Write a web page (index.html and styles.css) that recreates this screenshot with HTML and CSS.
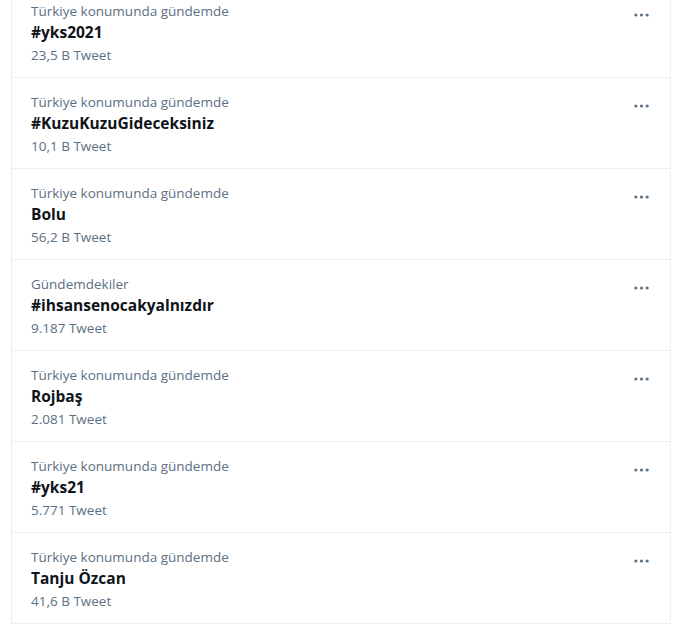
FILE: index.html
```html
<!DOCTYPE html>
<html lang="tr">
<head>
<meta charset="utf-8">
<link rel="stylesheet" href="styles.css">
</head>
<body>
<div class="list">
  <div class="trend">
    <div class="info">
      <div class="meta">Türkiye konumunda gündemde</div>
      <div class="title">#yks2021</div>
      <div class="count">23,5 B Tweet</div>
    </div>
    <svg class="more" viewBox="0 0 18 6"><circle cx="3" cy="3" r="1.7"/><circle cx="9" cy="3" r="1.7"/><circle cx="15" cy="3" r="1.7"/></svg>
  </div>
  <div class="trend">
    <div class="info">
      <div class="meta">Türkiye konumunda gündemde</div>
      <div class="title">#KuzuKuzuGideceksiniz</div>
      <div class="count">10,1 B Tweet</div>
    </div>
    <svg class="more" viewBox="0 0 18 6"><circle cx="3" cy="3" r="1.7"/><circle cx="9" cy="3" r="1.7"/><circle cx="15" cy="3" r="1.7"/></svg>
  </div>
  <div class="trend">
    <div class="info">
      <div class="meta">Türkiye konumunda gündemde</div>
      <div class="title">Bolu</div>
      <div class="count">56,2 B Tweet</div>
    </div>
    <svg class="more" viewBox="0 0 18 6"><circle cx="3" cy="3" r="1.7"/><circle cx="9" cy="3" r="1.7"/><circle cx="15" cy="3" r="1.7"/></svg>
  </div>
  <div class="trend">
    <div class="info">
      <div class="meta">Gündemdekiler</div>
      <div class="title">#ihsansenocakyalnızdır</div>
      <div class="count">9.187 Tweet</div>
    </div>
    <svg class="more" viewBox="0 0 18 6"><circle cx="3" cy="3" r="1.7"/><circle cx="9" cy="3" r="1.7"/><circle cx="15" cy="3" r="1.7"/></svg>
  </div>
  <div class="trend">
    <div class="info">
      <div class="meta">Türkiye konumunda gündemde</div>
      <div class="title">Rojbaş</div>
      <div class="count">2.081 Tweet</div>
    </div>
    <svg class="more" viewBox="0 0 18 6"><circle cx="3" cy="3" r="1.7"/><circle cx="9" cy="3" r="1.7"/><circle cx="15" cy="3" r="1.7"/></svg>
  </div>
  <div class="trend">
    <div class="info">
      <div class="meta">Türkiye konumunda gündemde</div>
      <div class="title">#yks21</div>
      <div class="count">5.771 Tweet</div>
    </div>
    <svg class="more" viewBox="0 0 18 6"><circle cx="3" cy="3" r="1.7"/><circle cx="9" cy="3" r="1.7"/><circle cx="15" cy="3" r="1.7"/></svg>
  </div>
  <div class="trend">
    <div class="info">
      <div class="meta">Türkiye konumunda gündemde</div>
      <div class="title">Tanju Özcan</div>
      <div class="count">41,6 B Tweet</div>
    </div>
    <svg class="more" viewBox="0 0 18 6"><circle cx="3" cy="3" r="1.7"/><circle cx="9" cy="3" r="1.7"/><circle cx="15" cy="3" r="1.7"/></svg>
  </div>
</div>
</body>
</html>
```

FILE: styles.css
```css
html, body {
  margin: 0;
  padding: 0;
  background: #ffffff;
  overflow: hidden;
}
body {
  font-family: "Open Sans", "Noto Sans", sans-serif;
  color: #0f1419;
}
.list {
  width: 658px;
  margin: -14px 0 0 11px;
  border-left: 1px solid #eceff1;
  border-right: 1px solid #eceff1;
  border-bottom: 1px solid #eceff1;
}
.trend {
  display: flex;
  justify-content: space-between;
  align-items: flex-start;
  height: 90px;
  border-top: 1px solid #eceff1;
  padding: 0 19px;
  box-sizing: content-box;
}
.info {
  display: flex;
  flex-direction: column;
  padding-top: 14px;
}
.meta {
  font-size: 13.5px;
  line-height: 20px;
  color: #5b7083;
}
.title {
  font-size: 15.5px;
  font-weight: 700;
  line-height: 23px;
  color: #0f1419;
}
.count {
  font-size: 13.5px;
  line-height: 22px;
  color: #5b7083;
}
.more {
  width: 17px;
  height: 6px;
  margin-top: 25px;
  margin-right: 1px;
  fill: #5b7083;
}
```
